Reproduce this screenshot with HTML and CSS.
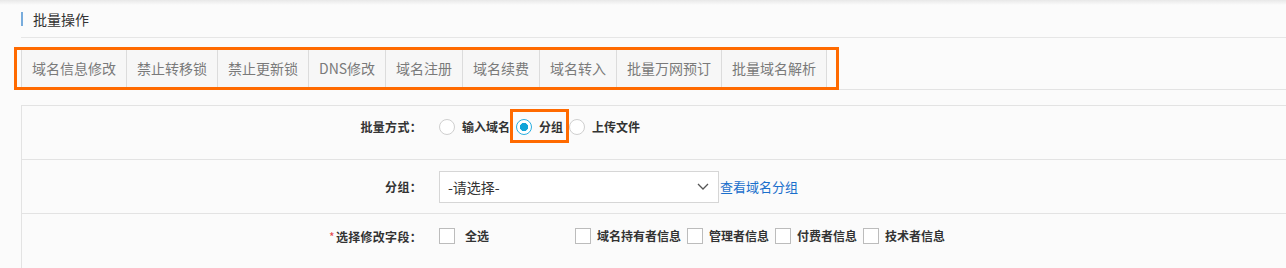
FILE: index.html
```html
<!DOCTYPE html>
<html lang="zh-CN">
<head>
    <meta charset="UTF-8">
    <title>批量操作</title>
    <link rel="stylesheet" href="styles.css">
</head>
<body>
    <div class="page">
        <div class="head">
            <div class="title">批量操作</div>
        </div>

        <div class="tabs">
            <a class="tab">域名信息修改</a>
            <a class="tab">禁止转移锁</a>
            <a class="tab">禁止更新锁</a>
            <a class="tab">DNS修改</a>
            <a class="tab">域名注册</a>
            <a class="tab">域名续费</a>
            <a class="tab">域名转入</a>
            <a class="tab">批量万网预订</a>
            <a class="tab">批量域名解析</a>
            <div class="mark-frame"></div>
        </div>

        <div class="form">
            <div class="row row-mode">
                <div class="label">批量方式：</div>
                <div class="value">
                    <label class="radio"><span class="dot"></span>输入域名</label>
                    <label class="radio checked marked"><span class="dot"></span>分组</label>
                    <label class="radio"><span class="dot"></span>上传文件</label>
                </div>
            </div>
            <div class="row">
                <div class="label">分组：</div>
                <div class="value">
                    <div class="select">
                        <span>-请选择-</span>
                        <svg width="12" height="7" viewBox="0 0 12 7"><path d="M1 1 L6 6 L11 1" fill="none" stroke="#555" stroke-width="1.3"/></svg>
                    </div>
                    <a class="link">查看域名分组</a>
                </div>
            </div>
            <div class="row row-fields">
                <div class="label"><span class="req">*</span>选择修改字段：</div>
                <div class="value">
                    <label class="check check-all"><span class="box"></span>全选</label>
                    <label class="check"><span class="box"></span>域名持有者信息</label>
                    <label class="check"><span class="box"></span>管理者信息</label>
                    <label class="check"><span class="box"></span>付费者信息</label>
                    <label class="check"><span class="box"></span>技术者信息</label>
                </div>
            </div>
        </div>
    </div>
</body>
</html>
```

FILE: styles.css
```css
* {
    box-sizing: border-box;
}

body {
    margin: 0;
    font-family: "Noto Sans CJK SC", "Noto Sans", sans-serif;
    color: #333;
    background: linear-gradient(#e8e8e8, #fbfbfb 5px) no-repeat, #fbfbfb;
}

.page {
    margin-left: 21px;
}

.head {
    padding: 12px 0 11px;
    border-bottom: 1px solid #e6e6e6;
}

.title {
    border-left: 2px solid #78acdc;
    padding-left: 10px;
    height: 14px;
    line-height: 14px;
    font-size: 14px;
    color: #333;
}

.tabs {
    position: relative;
    display: flex;
    margin-top: 10px;
    border-bottom: 1px solid #e3e3e3;
}

.tab {
    height: 41px;
    line-height: 41px;
    padding: 0 10px;
    font-size: 14px;
    color: #7a7a7a;
    background: #f7f7f7;
    border-right: 1px solid #dcdcdc;
}

.tab:first-child {
    border-left: 1px solid #dcdcdc;
}

.mark-frame {
    position: absolute;
    left: -7px;
    top: -1px;
    width: 825px;
    height: 43px;
    border: 3px solid #ff6a00;
}

.form {
    margin-top: 15px;
    border-top: 1px solid #e3e3e3;
    border-left: 1px solid #e3e3e3;
}

.row {
    display: flex;
    align-items: center;
    height: 54px;
    border-bottom: 1px solid #e3e3e3;
}

.row-mode {
    padding-bottom: 12px;
}

.row-fields {
    align-items: flex-start;
    height: 60px;
    padding-top: 14px;
    border-bottom: none;
}

.label {
    width: 402px;
    padding-right: 2px;
    text-align: right;
    font-size: 12px;
    font-weight: bold;
    line-height: 18px;
    letter-spacing: 0.3px;
    color: #333;
}

.req {
    color: #e5484d;
    font-weight: normal;
    margin-right: 1px;
}

.value {
    display: flex;
    align-items: center;
    padding-left: 15px;
}

.radio {
    position: relative;
    display: flex;
    align-items: center;
    gap: 7px;
    margin-right: 6px;
    font-size: 12px;
    font-weight: bold;
    line-height: 16px;
}

.dot {
    width: 16px;
    height: 16px;
    border: 1px solid #cfcfcf;
    border-radius: 50%;
    background: #fff;
}

.checked .dot {
    border-color: #2aaee0;
    background: radial-gradient(circle, #0fa3d8 0 3.8px, #fff 4.4px);
}

.marked::after {
    content: "";
    position: absolute;
    top: -10px;
    bottom: -8px;
    left: -6px;
    right: -6px;
    border: 3px solid #ff6a00;
}

.select {
    display: flex;
    align-items: center;
    justify-content: space-between;
    width: 280px;
    height: 32px;
    padding: 0 9px 0 8px;
    border: 1px solid #d6d6d6;
    background: #fff;
    font-size: 14px;
    color: #333;
}

.link {
    margin-left: 1px;
    font-size: 13px;
    color: #1a6fcc;
}

.check {
    display: flex;
    align-items: center;
    gap: 6px;
    margin-right: 6px;
    font-size: 12px;
    font-weight: bold;
    line-height: 16px;
}

.check-all {
    gap: 10px;
    width: 136px;
    margin-right: 0;
}

.box {
    width: 16px;
    height: 16px;
    border: 1px solid #bcbcbc;
    background: #fff;
}
```
